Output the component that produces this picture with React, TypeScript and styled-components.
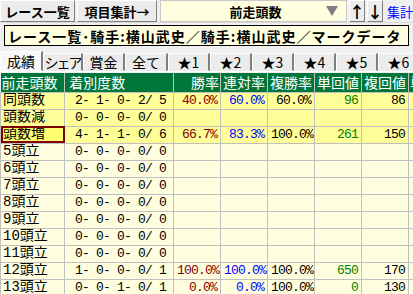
import styled, { createGlobalStyle } from "styled-components";

const GlobalStyle = createGlobalStyle`
  body {
    margin: 0;
    background: #f0f0f0;
    overflow: hidden;
    font-family: "Noto Sans CJK JP", sans-serif;
  }
`;

const Page = styled.div`
  width: 413px;
  height: 294px;
  overflow: hidden;
  background: #f0f0f0;
`;

const Toolbar = styled.div`
  display: flex;
  align-items: stretch;
  height: 22px;
  gap: 2px;
  border-bottom: 1px solid #d8d8d8;
  white-space: nowrap;
`;

const ToolButton = styled.div<{ width: number }>`
  width: ${(p) => p.width}px;
  box-sizing: border-box;
  display: flex;
  align-items: center;
  justify-content: center;
  background: #ececec;
  border: 1px solid;
  border-color: #ffffff #808080 #808080 #ffffff;
  font-size: 13px;
  font-weight: bold;
  color: #000;
  flex-shrink: 0;
`;

const Combo = styled.div`
  width: 187px;
  margin-left: 1px;
  box-sizing: border-box;
  display: flex;
  align-items: center;
  background: #ffffe0;
  border: 1px solid #c8c8c8;
  font-size: 13px;
  font-weight: bold;
  flex-shrink: 0;
`;

const ComboText = styled.span`
  flex: 1;
  text-align: center;
  padding-left: 24px;
`;

const ComboArrow = styled.span`
  width: 0;
  height: 0;
  margin-right: 8px;
  border-left: 6px solid transparent;
  border-right: 6px solid transparent;
  border-top: 10px solid #808080;
`;

const ArrowButton = styled(ToolButton)`
  font-size: 16px;
`;

const LinkText = styled.span`
  color: #0000ff;
  font-size: 13px;
  display: flex;
  align-items: center;
  margin-left: 2px;
`;

const TitleBox = styled.div`
  margin: 2px 4px 0 4px;
  height: 21px;
  box-sizing: border-box;
  border: 1px solid #000;
  background: #ffffe0;
  display: flex;
  align-items: center;
  padding-left: 3px;
  font-size: 14px;
  font-weight: bold;
  white-space: nowrap;
  overflow: hidden;
  letter-spacing: 1px;
`;

const TabBar = styled.div`
  display: flex;
  align-items: flex-end;
  margin-top: 5px;
  height: 20px;
  border-bottom: 1px solid #ffffff;
`;

const Tab = styled.div<{ active?: boolean; width: number; narrow?: boolean }>`
  width: ${(p) => p.width}px;
  flex-shrink: 0;
  box-sizing: border-box;
  height: ${(p) => (p.active ? 20 : 18)}px;
  display: flex;
  align-items: center;
  justify-content: center;
  font-size: 14px;
  letter-spacing: ${(p) => (p.narrow ? "-2px" : "0")};
  white-space: nowrap;
  overflow: hidden;
  background: ${(p) => (p.active ? "#f8f8f8" : "#ececec")};
  border: 1px solid;
  border-color: #ffffff #808080 transparent #ffffff;
  border-right-width: 2px;
  color: #000;
`;

const Table = styled.table`
  width: 448px;
  border-collapse: collapse;
  table-layout: fixed;
  margin-top: 1px;
  white-space: nowrap;
`;

const HeadCell = styled.th<{ width: number; align?: string }>`
  width: ${(p) => p.width}px;
  height: 19px;
  padding: 0 1px;
  box-sizing: border-box;
  background: #00763b;
  color: #ffffff;
  font-weight: normal;
  font-size: 14px;
  text-align: ${(p) => p.align || "center"};
  border-right: 1px solid #c0c0c0;
  overflow: hidden;
  line-height: 18px;
`;

const Cell = styled.td<{
  bright?: boolean;
  color?: string;
  align?: string;
  selected?: boolean;
}>`
  height: 17px;
  padding: 0 3px;
  box-sizing: border-box;
  line-height: 15px;
  background: ${(p) =>
    p.selected ? "#ffff70" : p.bright ? "#ffff99" : "#ffffe0"};
  color: ${(p) => p.color || "#000"};
  text-align: ${(p) => p.align || "right"};
  border: 1px solid #c0c0c0;
  outline: ${(p) => (p.selected ? "2px solid #800000" : "none")};
  outline-offset: -2px;
  font-family: "Liberation Mono", "Noto Sans CJK JP", monospace;
  font-size: 13px;
  letter-spacing: -0.8px;
  overflow: hidden;
`;

const LabelCell = styled(Cell)`
  padding-left: 2px;
  font-size: 14px;
  letter-spacing: 0;
`;

type Row = {
  label: string;
  counts: string;
  win?: string;
  ren?: string;
  fuku?: string;
  tan?: string;
  fukuVal?: string;
  bright?: boolean;
  selected?: boolean;
};

const rows: Row[] = [
  { label: "同頭数", counts: "2- 1- 0- 2/ 5", win: "40.0%", ren: "60.0%", fuku: "60.0%", tan: "96", fukuVal: "86", bright: true },
  { label: "頭数減", counts: "0- 0- 0- 0/ 0", bright: true },
  { label: "頭数増", counts: "4- 1- 1- 0/ 6", win: "66.7%", ren: "83.3%", fuku: "100.0%", tan: "261", fukuVal: "150", bright: true, selected: true },
  { label: "5頭立", counts: "0- 0- 0- 0/ 0" },
  { label: "6頭立", counts: "0- 0- 0- 0/ 0" },
  { label: "7頭立", counts: "0- 0- 0- 0/ 0" },
  { label: "8頭立", counts: "0- 0- 0- 0/ 0" },
  { label: "9頭立", counts: "0- 0- 0- 0/ 0" },
  { label: "10頭立", counts: "0- 0- 0- 0/ 0" },
  { label: "11頭立", counts: "0- 0- 0- 0/ 0" },
  { label: "12頭立", counts: "1- 0- 0- 0/ 1", win: "100.0%", ren: "100.0%", fuku: "100.0%", tan: "650", fukuVal: "170" },
  { label: "13頭立", counts: "0- 0- 1- 0/ 1", win: "0.0%", ren: "0.0%", fuku: "100.0%", tan: "0", fukuVal: "130" },
];

const tabs = [
  { label: "成績", width: 43 },
  { label: "シェア", width: 40, narrow: true },
  { label: "賞金", width: 42 },
  { label: "全て", width: 43 },
  { label: "★1", width: 42 },
  { label: "★2", width: 42 },
  { label: "★3", width: 42 },
  { label: "★4", width: 42 },
  { label: "★5", width: 42 },
  { label: "★6", width: 42 },
];

export default function App() {
  return (
    <Page>
      <GlobalStyle />
      <Toolbar>
        <ToolButton width={75}>レース一覧</ToolButton>
        <ToolButton width={80}>項目集計→</ToolButton>
        <Combo>
          <ComboText>前走頭数</ComboText>
          <ComboArrow />
        </Combo>
        <ArrowButton width={16}>↑</ArrowButton>
        <ArrowButton width={16}>↓</ArrowButton>
        <LinkText>集計→</LinkText>
      </Toolbar>
      <TitleBox>レース一覧･騎手:横山武史／騎手:横山武史／マークデータ</TitleBox>
      <TabBar>
        {tabs.map((t, i) => (
          <Tab key={t.label} width={t.width} narrow={t.narrow} active={i === 0}>
            {t.label}
          </Tab>
        ))}
      </TabBar>
      <Table>
        <thead>
          <tr>
            <HeadCell width={64} align="left">前走頭数</HeadCell>
            <HeadCell width={109} align="left">&nbsp;着別度数</HeadCell>
            <HeadCell width={47} align="right">勝率</HeadCell>
            <HeadCell width={47}>連対率</HeadCell>
            <HeadCell width={47}>複勝率</HeadCell>
            <HeadCell width={47}>単回値</HeadCell>
            <HeadCell width={47}>複回値</HeadCell>
            <HeadCell width={40} align="left">単</HeadCell>
          </tr>
        </thead>
        <tbody>
          {rows.map((r) => (
            <tr key={r.label}>
              <LabelCell bright={r.bright} selected={r.selected} align="left">
                {r.label}
              </LabelCell>
              <Cell bright={r.bright} align="left">
                &nbsp;{r.counts}
              </Cell>
              <Cell bright={r.bright} color="#800000">{r.win}</Cell>
              <Cell bright={r.bright} color="#0000ff">{r.ren}</Cell>
              <Cell bright={r.bright}>{r.fuku}</Cell>
              <Cell bright={r.bright} color="#008000">{r.tan}</Cell>
              <Cell bright={r.bright}>{r.fukuVal}</Cell>
              <Cell bright={r.bright}></Cell>
            </tr>
          ))}
        </tbody>
      </Table>
    </Page>
  );
}
